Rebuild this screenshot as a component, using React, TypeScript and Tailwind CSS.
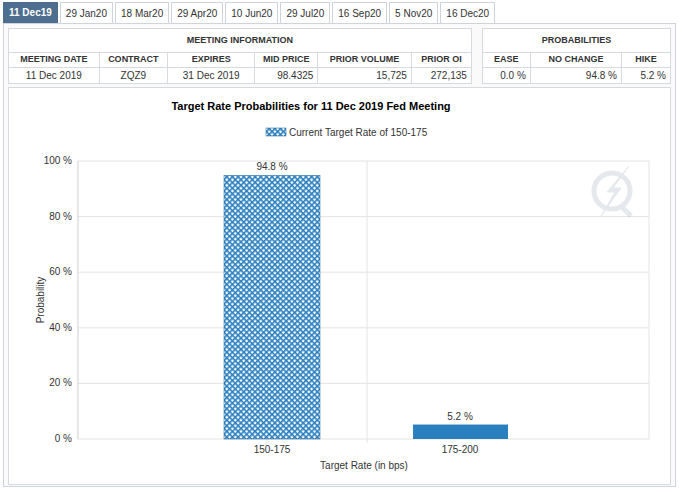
const tabs = ["11 Dec19", "29 Jan20", "18 Mar20", "29 Apr20", "10 Jun20", "29 Jul20", "16 Sep20", "5 Nov20", "16 Dec20"];

const th = "border border-[#d6d9dd] font-bold text-[#333] text-[9px] h-[15px] text-center";
const td = "border border-[#d6d9dd] h-[15px] px-1";

function Chart() {
  const y0 = 351, h = 278;
  const ticks = [0, 20, 40, 60, 80, 100];
  return (
    <svg width="665" height="398" className="block" style={{ fontFamily: "'Liberation Sans', Arial, sans-serif" }}>
      <defs>
        <pattern id="hatch" width="4" height="4" patternUnits="userSpaceOnUse" patternTransform="rotate(45)">
          <rect width="4" height="4" fill="#ffffff" />
          <rect width="4" height="1.6" fill="#2a7fbf" />
          <rect width="1.6" height="4" fill="#2a7fbf" />
        </pattern>
      </defs>
      <text x="302" y="22" textAnchor="middle" fontSize="11" fontWeight="bold" fill="#000">Target Rate Probabilities for 11 Dec 2019 Fed Meeting</text>
      <rect x="257" y="40" width="20" height="8" fill="url(#hatch)" stroke="#1f5f8f" strokeWidth="0.5" />
      <text x="280" y="48" fontSize="10" fill="#333">Current Target Rate of 150-175</text>
      {ticks.map((t) => {
        const y = y0 - (t / 100) * h;
        return (
          <g key={t}>
            <line x1="69" x2="640" y1={y} y2={y} stroke="#e4e4e4" />
            <text x="63" y={y + 3} textAnchor="end" fontSize="10" fill="#333">{t} %</text>
          </g>
        );
      })}
      <line x1="358" x2="358" y1={y0 - h} y2={y0 + 4} stroke="#e4e4e4" />
      <line x1="640" x2="640" y1={y0 - h} y2={y0} stroke="#e4e4e4" />
      <line x1="69" x2="69" y1={y0 - h} y2={y0} stroke="#cfcfcf" />
      <g opacity="0.25" stroke="#9aa7b5" fill="none">
        <circle cx="603" cy="103" r="18" strokeWidth="5" />
        <path d="M612 118 l10 10" strokeWidth="5" />
        <path d="M620 78 L598 104 L606 104 L592 128 L612 100 L604 100 Z" fill="#9aa7b5" strokeWidth="1" />
      </g>
      <rect x="215" y={y0 - 0.948 * h} width="96" height={0.948 * h} fill="url(#hatch)" stroke="#1f5f8f" strokeWidth="0.5" />
      <text x="263" y={y0 - 0.948 * h - 5} textAnchor="middle" fontSize="10" fill="#333">94.8 %</text>
      <rect x="404" y={y0 - 0.052 * h} width="95" height={0.052 * h} fill="#2a7fbf" />
      <text x="451" y={y0 - 0.052 * h - 5} textAnchor="middle" fontSize="10" fill="#333">5.2 %</text>
      <text x="263" y="365" textAnchor="middle" fontSize="10" fill="#333">150-175</text>
      <text x="451" y="365" textAnchor="middle" fontSize="10" fill="#333">175-200</text>
      <text x="355" y="381" textAnchor="middle" fontSize="10" fill="#333">Target Rate (in bps)</text>
      <text transform="translate(35 212) rotate(-90)" textAnchor="middle" fontSize="10" fill="#333">Probability</text>
    </svg>
  );
}

export default function App() {
  return (
    <div className="w-[679px] h-[490px] bg-white text-[10px] text-[#333]" style={{ fontFamily: "'Liberation Sans', Arial, sans-serif" }}>
      <div className="flex gap-[2px] pl-[3px] pt-[2px] h-[23px]">
        {tabs.map((t, i) => (
          <div
            key={t}
            className={
              i === 0
                ? "px-[5px] flex items-center bg-[#4d6e8f] text-white font-bold border border-[#4d6e8f] text-[10px]"
                : "px-[5px] flex items-center bg-white border border-[#cfd4da] border-b-0 text-[#333] text-[10px]"
            }
          >
            {t}
          </div>
        ))}
      </div>
      <div className="mx-[3px] border border-[#cfd4da] h-[464px] p-[4px] bg-[#fafafa]">
        <div className="flex gap-[10px]">
          <table className="w-[466px] border-collapse bg-white">
            <tbody>
              <tr><td colSpan={6} className={`${th} h-[24px]`}>MEETING INFORMATION</td></tr>
              <tr>
                <td className={th}>MEETING DATE</td>
                <td className={th}>CONTRACT</td>
                <td className={th}>EXPIRES</td>
                <td className={th}>MID PRICE</td>
                <td className={th}>PRIOR VOLUME</td>
                <td className={th}>PRIOR OI</td>
              </tr>
              <tr>
                <td className={`${td} text-center`}>11 Dec 2019</td>
                <td className={`${td} text-center`}>ZQZ9</td>
                <td className={`${td} text-center`}>31 Dec 2019</td>
                <td className={`${td} text-right`}>98.4325</td>
                <td className={`${td} text-right`}>15,725</td>
                <td className={`${td} text-right`}>272,135</td>
              </tr>
            </tbody>
          </table>
          <table className="w-[190px] border-collapse bg-white">
            <tbody>
              <tr><td colSpan={3} className={`${th} h-[24px]`}>PROBABILITIES</td></tr>
              <tr>
                <td className={`${th} w-[48px]`}>EASE</td>
                <td className={th}>NO CHANGE</td>
                <td className={`${th} w-[49px]`}>HIKE</td>
              </tr>
              <tr>
                <td className={`${td} text-right`}>0.0 %</td>
                <td className={`${td} text-right`}>94.8 %</td>
                <td className={`${td} text-right`}>5.2 %</td>
              </tr>
            </tbody>
          </table>
        </div>
        <div className="mt-[3px] border border-[#d6d9dd] bg-white h-[398px]">
          <Chart />
        </div>
      </div>
    </div>
  );
}
